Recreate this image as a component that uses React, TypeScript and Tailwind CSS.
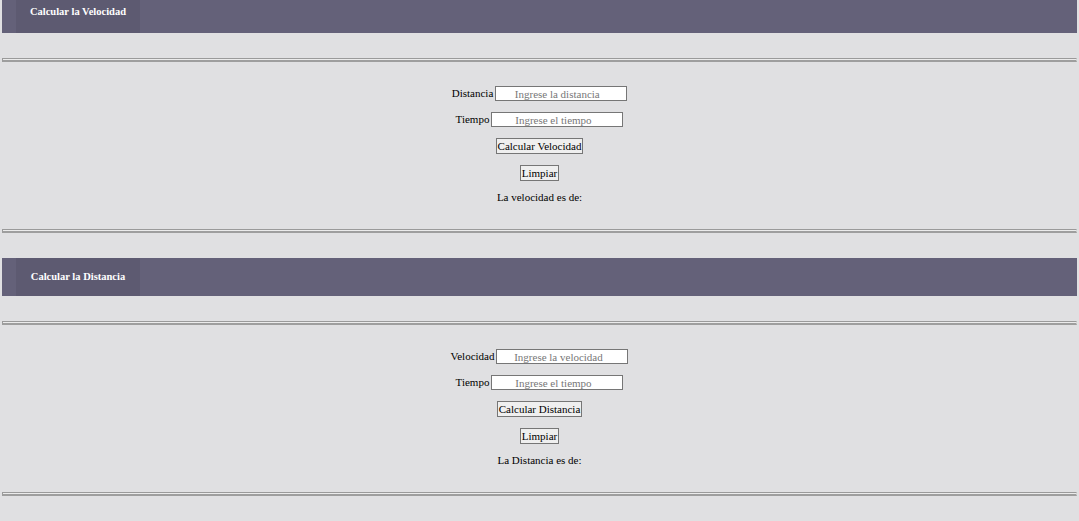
import React from "react";

const serif = { fontFamily: '"Liberation Serif", "Times New Roman", serif' };

function Header({ title, first }: { title: string; first?: boolean }) {
  return (
    <div className={`mx-[2px] flex bg-[#646179] ${first ? "h-[33px]" : "h-[38px]"}`}>
      <div
        className={`ml-[14px] flex w-[124px] justify-center bg-[#5d5a71] text-[10.5px] font-bold leading-none text-white ${
          first ? "pt-[7px]" : "items-center"
        }`}
      >
        <span>{title}</span>
      </div>
    </div>
  );
}

function Hr() {
  return (
    <div className="mx-[2px] h-[4px] border-t border-b-2 border-l border-r border-t-[#9a9a9a] border-b-[#9e9e9e] border-l-[#9a9a9a] border-r-[#d8d8d8] bg-[#ebebeb]" />
  );
}

function Field({ label, placeholder }: { label: string; placeholder: string }) {
  return (
    <div className="flex h-[15px] items-center justify-center gap-[2px] leading-none">
      <span className="text-[11px] leading-none text-black">{label}</span>
      <input
        placeholder={placeholder}
        className="h-[15px] w-[132px] border border-[#767676] bg-white p-0 pr-[8px] text-center text-[11px] leading-[13px] text-black outline-none placeholder:text-[#777777]"
        style={serif}
      />
    </div>
  );
}

function Btn({ children }: { children: React.ReactNode }) {
  return (
    <div className="flex h-[16px] items-center justify-center leading-none">
      <button
        className="h-[16px] border border-[#767676] bg-[#efefef] px-[1px] py-0 text-[11px] leading-[14px] text-black"
        style={serif}
      >
        {children}
      </button>
    </div>
  );
}

function Section({
  title,
  first,
  l1,
  p1,
  b1,
  res,
}: {
  title: string;
  first?: boolean;
  l1: string;
  p1: string;
  b1: string;
  res: string;
}) {
  return (
    <div className="flex flex-col">
      <Header title={title} first={first} />
      <div className="mt-[25px]">
        <Hr />
      </div>
      <div className="mt-[24px] flex flex-col">
        <Field label={l1} placeholder={p1} />
        <div className="mt-[11px]">
          <Field label="Tiempo" placeholder="Ingrese el tiempo" />
        </div>
        <div className="mt-[11px]">
          <Btn>{b1}</Btn>
        </div>
        <div className="mt-[11px]">
          <Btn>Limpiar</Btn>
        </div>
        <div className="mt-[9px] flex h-[15px] items-center justify-center text-[11px] leading-none text-black">
          {res}
        </div>
      </div>
      <div className="mt-[24px]">
        <Hr />
      </div>
    </div>
  );
}

export default function App() {
  return (
    <div className="min-h-[521px] w-full bg-[#e0e0e2]" style={serif}>
      <Section
        title="Calcular la Velocidad"
        first
        l1="Distancia"
        p1="Ingrese la distancia"
        b1="Calcular Velocidad"
        res="La velocidad es de:"
      />
      <div className="mt-[25px]">
        <Section
          title="Calcular la Distancia"
          l1="Velocidad"
          p1="Ingrese la velocidad"
          b1="Calcular Distancia"
          res="La Distancia es de:"
        />
      </div>
    </div>
  );
}
